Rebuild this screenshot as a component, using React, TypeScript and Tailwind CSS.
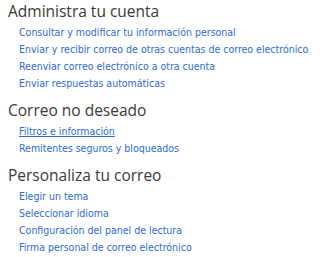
import React from 'react';

interface Section {
  title: string;
  links: string[];
}

const sections: Section[] = [
  {
    title: "Administra tu cuenta",
    links: [
      "Consultar y modificar tu información personal",
      "Enviar y recibir correo de otras cuentas de correo electrónico",
      "Reenviar correo electrónico a otra cuenta",
      "Enviar respuestas automáticas",
    ],
  },
  {
    title: "Correo no deseado",
    links: ["Filtros e información", "Remitentes seguros y bloqueados"],
  },
  {
    title: "Personaliza tu correo",
    links: [
      "Elegir un tema",
      "Seleccionar idioma",
      "Configuración del panel de lectura",
      "Firma personal de correo electrónico",
    ],
  },
];

export default function App() {
  return (
    <div className="w-[320px] h-[257px] overflow-hidden bg-white pl-[8px] pt-[1px] flex flex-col gap-[10px]">
      {sections.map((section) => (
        <div key={section.title} className="flex flex-col gap-[1px]">
          <h2
            className="text-[15.5px] leading-[20px] text-[#3a3a3a] font-normal whitespace-nowrap"
            style={{ fontFamily: '"Open Sans", "Noto Sans", sans-serif' }}
          >
            {section.title}
          </h2>
          <ul className="pl-[11px] flex flex-col">
            {section.links.map((link) => (
              <li key={link} className="h-[17px] leading-[17px]">
                <a
                  href="#"
                  className={
                    "text-[10.5px] text-[#2f6bd1] whitespace-nowrap " +
                    (link === "Filtros e información" ? "underline" : "no-underline")
                  }
                  style={{ fontFamily: '"DejaVu Sans Condensed", "DejaVu Sans", sans-serif' }}
                >
                  {link}
                </a>
              </li>
            ))}
          </ul>
        </div>
      ))}
    </div>
  );
}
